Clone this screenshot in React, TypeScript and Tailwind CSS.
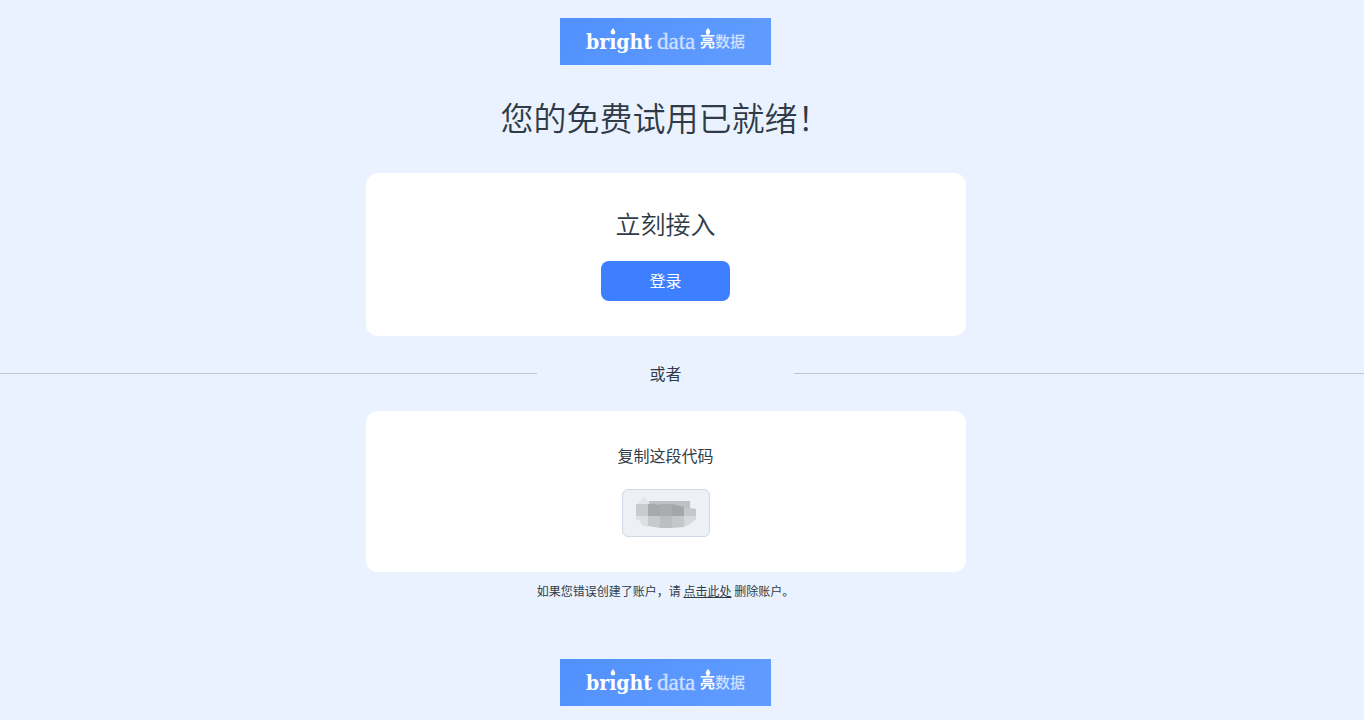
import React from 'react';

interface LogoProps {
  id: string;
}

const Logo: React.FC<LogoProps> = ({ id }) => (
  <svg width="211" height="47" viewBox="0 0 211 47" role="img" aria-label="bright data 亮数据">
    <defs>
      <linearGradient id={id} x1="0" y1="0" x2="1" y2="0.2">
        <stop offset="0" stopColor="#5190fd" />
        <stop offset="1" stopColor="#5f9bff" />
      </linearGradient>
    </defs>
    <rect width="211" height="47" fill={`url(#${id})`} />
    <g fill="#fff">
      <text x="26" y="31" fontSize="21" fontWeight="700" fontFamily="'DejaVu Serif Condensed', 'DejaVu Serif', serif">
        brıght
      </text>
      <path d="M53 10c1.200 1.600 2.300 2.800 2.300 4.300a2.300 2.300 0 0 1-4.600 0c0-1.500 1.100-2.700 2.300-4.300z" />
      <text x="97" y="31" fontSize="23" opacity="0.7" fontFamily="'Liberation Serif', serif" stroke="#fff" strokeWidth="0.3">
        data
      </text>
      <path d="M148 10c1.200 1.600 2.300 2.600 2.300 4.100a2.300 2.300 0 0 1-4.600 0c0-1.500 1.100-2.500 2.300-4.100z" />
      <text x="140" y="29" fontSize="15" fontWeight="700" fontFamily="'Noto Sans CJK SC', sans-serif">
        亮
      </text>
      <text x="155" y="29" fontSize="15" opacity="0.7" fontWeight="500" fontFamily="'Noto Sans CJK SC', sans-serif">
        数据
      </text>
    </g>
  </svg>
);

// Pixelated patch that hides the code
const MaskedCode = () => (
  <svg width="60" height="32" viewBox="0 0 60 32" aria-hidden="true">
    <path d="M0 8L8 0L16 8z" fill="#e3e6ea" />
    <path d="M13 4h41v7H13z" fill="#bfc0c3" />
    <path d="M0 7h12v12H0z" fill="#c9cbcf" />
    <path d="M12 7h5l7 1v11H12z" fill="#a6a8ab" />
    <path d="M24 7h12v12H24z" fill="#abacaf" />
    <path d="M36 7l12 3v9H36z" fill="#a5a6a9" />
    <path d="M48 10l12 2v7H48z" fill="#c5c7ca" />
    <path d="M0 19h12v11L6 28L4 24L0 22z" fill="#dcdee2" />
    <path d="M12 19h12v12L12 29z" fill="#c8c9cc" />
    <path d="M24 19h12v12H24z" fill="#bdbec1" />
    <path d="M36 19h12v11L36 31z" fill="#c6c7ca" />
    <path d="M48 19h12v3L54 27L48 30z" fill="#d6d8dc" />
  </svg>
);

const App: React.FC = () => {
  return (
    <div className="min-h-screen bg-[#ebf2ff] pr-[33px] pt-[18px] pb-[14px] text-[#2f3c48] font-['Noto_Sans_CJK_SC',sans-serif]">
      <main className="flex flex-col items-center">
        <Logo id="logo-top" />

        <h1 className="mt-8 mb-9 text-[33px] leading-10 font-[350]">您的免费试用已就绪！</h1>

        <section className="flex w-full max-w-[600px] flex-col items-center rounded-xl bg-white pt-8 pb-[35px]">
          <h2 className="text-[25px] leading-9 font-[350]">立刻接入</h2>
          <button type="button" className="mt-5 h-10 rounded-lg bg-[#3d7fff] px-12 pb-0.5 text-base text-white">
            登录
          </button>
        </section>

        <div className="flex w-full items-center pt-[25px] pb-[26px]">
          <div className="flex-1">
            <div className="h-px bg-[#bcc6d6]" />
          </div>
          <span className="w-[257px] text-center text-base leading-6">或者</span>
          <div className="flex-1">
            <div className="-mr-[33px] h-px bg-[#bcc6d6]" />
          </div>
        </div>

        <section className="flex w-full max-w-[600px] flex-col items-center rounded-xl bg-white pt-8 pb-[35px]">
          <p className="text-base leading-6">复制这段代码</p>
          <div className="mt-[22px] flex h-12 w-[88px] items-center justify-center rounded-md border border-[#cfdae4] bg-[#edf0f5]">
            <MaskedCode />
          </div>
        </section>

        <p className="mt-2 text-xs leading-[22px]">
          如果您错误创建了账户，请 <a href="#" className="underline">点击此处</a> 删除账户。
        </p>

        <footer className="mt-[57px]">
          <Logo id="logo-bottom" />
        </footer>
      </main>
    </div>
  );
};

export default App;
